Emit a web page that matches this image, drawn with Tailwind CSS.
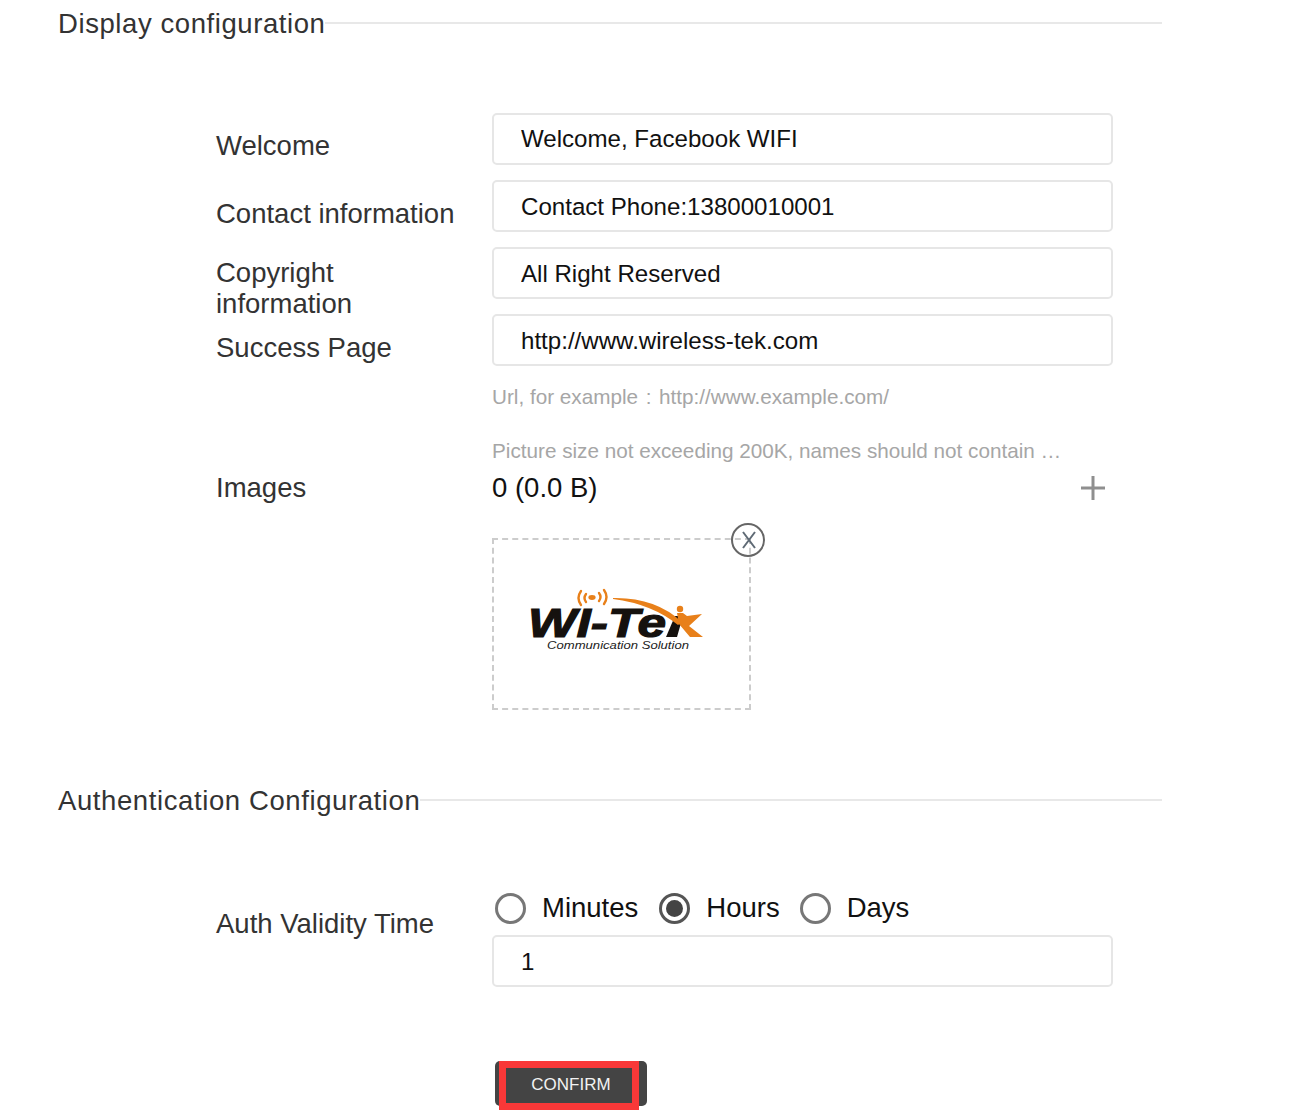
<!DOCTYPE html>
<html lang="en">
<head>
    <meta charset="UTF-8">
    <meta name="viewport" content="width=device-width, initial-scale=1.0">
    <title>Display configuration</title>
    <script src="https://cdn.jsdelivr.net/npm/@tailwindcss/browser@4"></script>
</head>
<body class="bg-white h-[1115px] overflow-hidden font-['Liberation_Sans',Arial,sans-serif] text-[#333]">
<div class="w-[1162px] pl-[58px] pt-[7px]">

    <!-- Display configuration -->
    <div class="flex items-center h-[32px]">
        <h2 class="text-[27.5px] leading-[32px] tracking-[0.58px] pt-[1px] shrink-0">Display configuration</h2>
        <div class="flex-1 h-[2px] -mt-[1px] bg-[#e8e8e8]"></div>
    </div>

    <form class="pl-[158px] mt-[74px]">
        <div class="flex h-[52px]">
            <label class="w-[276px] pt-[17px] text-[27.5px] leading-[31px]">Welcome</label>
            <input type="text" value="Welcome, Facebook WIFI" class="w-[621px] h-[52px] pl-[27px] border-2 border-[#e6e6e6] rounded-[5px] text-[24.1px] text-[#111]">
        </div>
        <div class="flex h-[52px] mt-[15px]">
            <label class="w-[276px] pt-[18px] text-[27.5px] leading-[31px]">Contact information</label>
            <input type="text" value="Contact Phone:13800010001" class="w-[621px] h-[52px] pl-[27px] pt-[2px] border-2 border-[#e6e6e6] rounded-[5px] text-[24.1px] text-[#111]">
        </div>
        <div class="flex h-[52px] mt-[15px]">
            <label class="w-[276px] pt-[10px] text-[27.5px] leading-[31px]">Copyright<br>information</label>
            <input type="text" value="All Right Reserved" class="w-[621px] h-[52px] pl-[27px] pt-[2px] border-2 border-[#e6e6e6] rounded-[5px] text-[24.1px] text-[#111]">
        </div>
        <div class="flex h-[52px] mt-[15px]">
            <label class="w-[276px] pt-[18px] text-[27.5px] leading-[31px]">Success Page</label>
            <input type="text" value="http://www.wireless-tek.com" class="w-[621px] h-[52px] pl-[27px] pt-[2px] border-2 border-[#e6e6e6] rounded-[5px] text-[24.1px] text-[#111]">
        </div>
        <p class="ml-[276px] mt-[19px] text-[20.7px] leading-[24px] text-[#a6a6a6] flex">Url, for example<span class="w-[21px] text-center">:</span>http://www.example.com/</p>
        <p class="ml-[276px] mt-[30px] text-[20.7px] leading-[24px] text-[#a6a6a6]">Picture size not exceeding 200K, names should not contain …</p>

        <div class="flex mt-[10px] h-[30px] items-center">
            <label class="w-[276px] text-[27.5px] leading-[30px]">Images</label>
            <div class="w-[621px] flex items-center justify-between pr-[7px]">
                <span class="text-[27.5px] leading-[30px] text-[#111]">0 (0.0 B)</span>
                <svg width="26" height="26" viewBox="0 0 26 26" stroke="#8f8f8f" stroke-width="3" fill="none"><path d="M13 1v24M1 13h24"/></svg>
            </div>
        </div>

        <div class="relative ml-[276px] mt-[35px] w-[259px] h-[172px] border-2 border-dashed border-[#ccc]">
            <!-- logo -->
            <svg class="absolute left-[34px] top-[48px]" width="184" height="70" viewBox="0 0 184 70">
                <g fill="none" stroke="#e8801a" stroke-width="2.4" stroke-linecap="round">
                    <path d="M53 3q-5 7 0 14"/>
                    <path d="M58 6q-3 4 0 8"/>
                    <path d="M71 5q3 4 0 8"/>
                    <path d="M76 2q5 7 0 14"/>
                </g>
                <ellipse cx="64" cy="9.5" rx="3.6" ry="2.4" fill="#e8801a"/>
                <text x="0" y="49" font-family="Liberation Sans" font-size="41" font-weight="700" font-style="italic" fill="#15110e" stroke="#15110e" stroke-width="1.2" textLength="138" lengthAdjust="spacingAndGlyphs">WI-Te</text>
                <path d="M147 28h8l-6 21h-11z" fill="#15110e"/>
                <path d="M85 10q42-1 69 24l-4 3q-26-21-65-26z" fill="#e8801a"/>
                <circle cx="152" cy="21" r="3.2" fill="#e8801a"/>
                <path d="M149 25h6l4 3 15-2-13 12 14 11h-13l-11-13z" fill="#e8801a"/>
                <text x="19" y="61" font-family="Liberation Sans" font-size="11.5" font-style="italic" fill="#222" textLength="142" lengthAdjust="spacingAndGlyphs">Communication Solution</text>
            </svg>
            <!-- remove image -->
            <span class="absolute -right-[16px] -top-[17px] w-[34px] h-[34px] rounded-full border-2 border-[#666] flex items-center justify-center">
                <svg width="16" height="18" viewBox="0 0 16 18" stroke="#5f6a75" stroke-width="2" fill="none" class="ml-[1px]"><path d="M2 1l12 16M14 1L2 17"/></svg>
            </span>
        </div>
    </form>

    <!-- Authentication Configuration -->
    <div class="flex items-center h-[32px] mt-[74px]">
        <h2 class="text-[27.5px] leading-[32px] tracking-[0.6px] pt-[1px] shrink-0">Authentication Configuration</h2>
        <div class="flex-1 h-[2px] -mt-[1px] bg-[#e8e8e8]"></div>
    </div>

    <form class="pl-[158px] mt-[76px]">
        <div class="flex">
            <label class="w-[276px] pt-[16px] text-[27.5px] leading-[31px]">Auth Validity Time</label>
            <div class="w-[621px]">
                <div class="flex items-center h-[32px] pl-[3px] text-[27.5px] text-[#111]">
                    <span class="w-[31px] h-[31px] rounded-full border-[3px] border-[#777]"></span>
                    <span class="ml-[16px]">Minutes</span>
                    <span class="ml-[21px] w-[31px] h-[31px] rounded-full border-[3px] border-[#555] flex items-center justify-center">
                        <span class="w-[17px] h-[17px] rounded-full bg-[#444]"></span>
                    </span>
                    <span class="ml-[16px]">Hours</span>
                    <span class="ml-[20px] w-[31px] h-[31px] rounded-full border-[3px] border-[#777]"></span>
                    <span class="ml-[16px]">Days</span>
                </div>
                <input type="text" value="1" class="block mt-[11px] w-[621px] h-[52px] pl-[27px] pt-[2px] border-2 border-[#e6e6e6] rounded-[5px] text-[24.1px] text-[#111]">
                <div class="relative ml-[3px] mt-[74px] w-[152px] h-[45px]">
                    <button type="button" class="w-full h-full pt-[3px] bg-[#444] rounded-[5px] text-[17px] text-[#f2f2f2]">CONFIRM</button>
                    <!-- red highlight round the button -->
                    <span class="absolute left-[4px] top-0 w-[140px] h-[49px] border-[7px] border-[#f93838]"></span>
                </div>
            </div>
        </div>
    </form>
</div>
</body>
</html>
